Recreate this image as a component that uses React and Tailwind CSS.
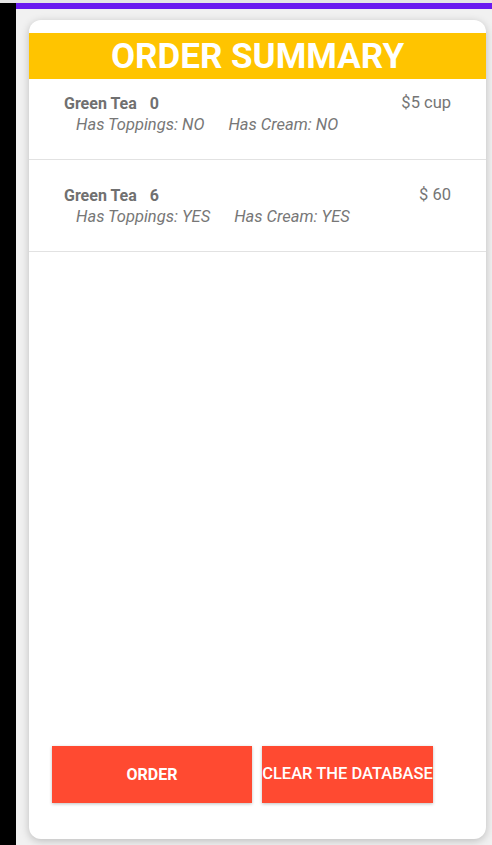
const orders = [
  { name: 'Green Tea', qty: 0, price: '$5 cup', toppings: 'NO', cream: 'NO', pad: 'pt-[15px] pb-[24px]' },
  { name: 'Green Tea', qty: 6, price: '$ 60', toppings: 'YES', cream: 'YES', pad: 'pt-[26px] pb-[24px]' },
];

export default function App() {
  return (
    <div className="w-[492px] h-[845px] bg-[#f1f1f1] flex flex-col overflow-hidden font-['Roboto',sans-serif]">
      <div className="h-[3px] bg-[#e6e6e6]" />
      <div className="flex-1 flex min-h-0">
        {/* left black edge */}
        <div className="w-[16px] bg-black" />
        <div className="flex-1 flex flex-col min-w-0">
          <div className="h-[6px] bg-[#6a1bf0]" />
          <div className="flex-1 flex flex-col pl-[13px] pr-[6px] pt-[11px] pb-[6px] min-h-0">
            <div className="flex-1 flex flex-col bg-white rounded-[12px] shadow-[0_2px_8px_rgba(0,0,0,0.22)] pt-[13px] overflow-hidden">
              {/* header */}
              <div className="h-[46px] bg-[#ffc400] flex items-center justify-center">
                <span className="text-white font-bold text-[35px] leading-none">ORDER SUMMARY</span>
              </div>

              {/* order rows */}
              {orders.map((o, i) => (
                <div key={i} className={`border-b border-[#e2e2e2] pl-[35px] pr-[35px] ${o.pad}`}>
                  <div className="flex items-center justify-between h-[19px]">
                    <div className="text-[16px] font-bold text-[#707070] flex gap-[13px]">
                      <span>{o.name}</span>
                      <span>{o.qty}</span>
                    </div>
                    <span className="text-[16.5px] text-[#757575]">{o.price}</span>
                  </div>
                  <div className="flex gap-[24px] pl-[12px] mt-[3px] h-[19px] items-center text-[16.5px] italic text-[#777777]">
                    <span>Has Toppings: {o.toppings}</span>
                    <span>Has Cream: {o.cream}</span>
                  </div>
                </div>
              ))}

              <div className="flex-1" />

              {/* actions */}
              <div className="flex gap-[10px] pl-[23px] pb-[36px]">
                <button className="w-[200px] h-[57px] bg-[#ff4a31] text-white text-[16px] font-bold shadow-[0_1px_3px_rgba(0,0,0,0.25)]">
                  ORDER
                </button>
                <button className="w-[171px] h-[57px] bg-[#ff4a31] text-white text-[16.5px] font-medium shadow-[0_1px_3px_rgba(0,0,0,0.25)] whitespace-nowrap overflow-hidden flex items-center justify-center">
                  CLEAR THE DATABASE
                </button>
              </div>
            </div>
          </div>
        </div>
      </div>
    </div>
  );
}
